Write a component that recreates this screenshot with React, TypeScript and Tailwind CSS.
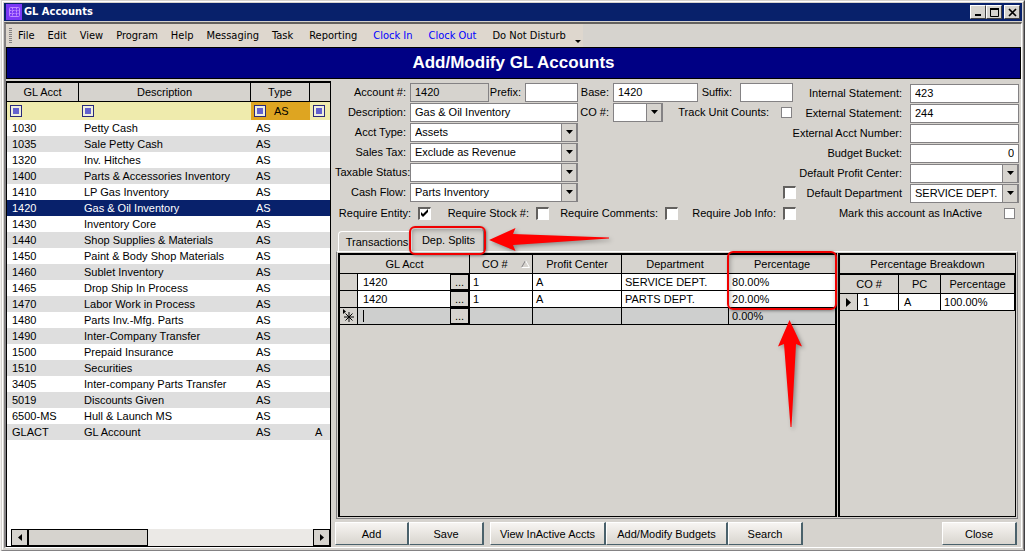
import { useState } from "react";
import type { ReactNode } from "react";

type Account = {
  acct: string;
  description: string;
  type: string;
  flag?: string;
};

const ACCOUNTS: Account[] = [
  { acct: "1030", description: "Petty Cash", type: "AS" },
  { acct: "1035", description: "Sale Petty Cash", type: "AS" },
  { acct: "1320", description: "Inv. Hitches", type: "AS" },
  { acct: "1400", description: "Parts & Accessories Inventory", type: "AS" },
  { acct: "1410", description: "LP Gas Inventory", type: "AS" },
  { acct: "1420", description: "Gas & Oil Inventory", type: "AS" },
  { acct: "1430", description: "Inventory Core", type: "AS" },
  { acct: "1440", description: "Shop Supplies & Materials", type: "AS" },
  { acct: "1450", description: "Paint & Body Shop Materials", type: "AS" },
  { acct: "1460", description: "Sublet Inventory", type: "AS" },
  { acct: "1465", description: "Drop Ship In Process", type: "AS" },
  { acct: "1470", description: "Labor Work in Process", type: "AS" },
  { acct: "1480", description: "Parts Inv.-Mfg. Parts", type: "AS" },
  { acct: "1490", description: "Inter-Company Transfer", type: "AS" },
  { acct: "1500", description: "Prepaid Insurance", type: "AS" },
  { acct: "1510", description: "Securities", type: "AS" },
  { acct: "3405", description: "Inter-company Parts Transfer", type: "AS" },
  { acct: "5019", description: "Discounts Given", type: "AS" },
  { acct: "6500-MS", description: "Hull & Launch MS", type: "AS" },
  { acct: "GLACT", description: "GL Account", type: "AS", flag: "A" },
];

const SPLITS = [
  { acct: "1420", co: "1", pc: "A", dept: "SERVICE DEPT.", pct: "80.00%" },
  { acct: "1420", co: "1", pc: "A", dept: "PARTS DEPT.", pct: "20.00%" },
];

const MENU = ["File", "Edit", "View", "Program", "Help", "Messaging"];

function TextField({
  id,
  value = "",
  className = "",
}: {
  id: string;
  value?: string;
  className?: string;
}) {
  return (
    <input
      id={id}
      type="text"
      defaultValue={value}
      className={`h-[19px] shrink-0 border border-[#848284] px-1 outline-none ${className}`}
    />
  );
}

function SelectField({ id, value = "", className = "" }: { id: string; value?: string; className?: string }) {
  return (
    <div className={`relative h-[19px] shrink-0 border border-[#848284] bg-white ${className}`}>
      <select id={id} defaultValue={value} className="block h-full w-full appearance-none bg-white pl-1 pr-4 outline-none">
        <option value={value}>{value}</option>
      </select>
      <span className="pointer-events-none absolute inset-y-0 right-0 flex w-4 items-center justify-center border-l border-r border-[#848284] bg-[#d6d3ce]">
        <svg width="7" height="4" viewBox="0 0 7 4">
          <path d="M0 0h7L3.5 4z" />
        </svg>
      </span>
    </div>
  );
}

function Check({ id, checked = false, flat = false, label }: { id: string; checked?: boolean; flat?: boolean; label?: string }) {
  const [on, setOn] = useState(checked);
  return (
    <span className="relative block shrink-0">
      <input
        id={id}
        type="checkbox"
        aria-label={label}
        checked={on}
        onChange={(e) => setOn(e.target.checked)}
        className={
          flat
            ? "block size-[11px] appearance-none border border-[#848284] bg-white"
            : "block size-[13px] appearance-none border-t-2 border-l-2 border-r border-b border-t-[#63615f] border-l-[#63615f] border-r-white border-b-white bg-white"
        }
      />
      {on && (
        <svg className="pointer-events-none absolute inset-0" width="13" height="13" viewBox="0 0 13 13">
          <path d="M3 5v3l2 2 5-5V2L5 7z" />
        </svg>
      )}
    </span>
  );
}

function FormLabel({ htmlFor, className = "", children }: { htmlFor: string; className?: string; children: ReactNode }) {
  return (
    <label htmlFor={htmlFor} className={`shrink-0 whitespace-nowrap text-right ${className}`}>
      {children}
    </label>
  );
}

function TitleButton({ label, children }: { label: string; children: ReactNode }) {
  return (
    <button
      aria-label={label}
      className="flex h-[14px] w-4 items-center justify-center border border-t-white border-l-white border-r-[#424142] border-b-[#424142] bg-[#d6d3ce]"
    >
      <svg width="9" height="9" viewBox="0 0 9 9" fill="none" stroke="black">
        {children}
      </svg>
    </button>
  );
}

function TitleBar() {
  return (
    <header className="flex h-[18px] items-center bg-[#08216b] pl-0.5 pr-0.5">
      <svg width="16" height="16" viewBox="0 0 16 16">
        <rect width="16" height="16" fill="#7b38f5" />
        <g fill="none" stroke="#c08bff">
          <rect x="3.5" y="3.5" width="10" height="9" rx="1" />
          <path d="M3.5 6.5h10M3.5 9.5h10M6.5 3.5v9M10.5 3.5v9" strokeDasharray="2 1" />
        </g>
      </svg>
      <h1 className="ml-0.5 flex-1 font-['DejaVu_Sans_Condensed','DejaVu_Sans',sans-serif] text-[11px] font-bold text-white">
        GL Accounts
      </h1>
      <TitleButton label="Minimize">
        <path d="M1 7h6" strokeWidth="2" />
      </TitleButton>
      <TitleButton label="Maximize">
        <path d="M.5 1v7.500h8V1" />
        <path d="M0 1h9" strokeWidth="2" />
      </TitleButton>
      <span className="w-0.5" />
      <TitleButton label="Close">
        <path d="M1 1l7 7M8 1L1 8" strokeWidth="1.700" />
      </TitleButton>
    </header>
  );
}

function MenuBar() {
  return (
    <nav className="flex h-[23px] font-['DejaVu_Sans_Condensed','DejaVu_Sans',sans-serif]">
      <div className="flex items-center gap-[13px] bg-[#ded7ce] pl-[3px] pr-0.5">
        <svg width="3" height="15" viewBox="0 0 3 15" className="-mr-[7px]">
          <path d="M1.500 0v15" stroke="#848284" strokeWidth="3" strokeDasharray="1 1" />
        </svg>
        {MENU.map((item) => (
          <button key={item}>{item}</button>
        ))}
        <div className="flex items-center gap-4">
          <button>Task</button>
          <button>Reporting</button>
          <button className="text-[#0000ff]">Clock In</button>
          <button className="text-[#0000ff]">Clock Out</button>
          <button>Do Not Disturb</button>
        </div>
        <button aria-label="More commands" className="-ml-1 self-end pb-1">
          <svg width="6" height="3" viewBox="0 0 6 3">
            <path d="M0 0h6L3 3z" />
          </svg>
        </button>
      </div>
    </nav>
  );
}

function FilterIcon() {
  return (
    <svg width="12" height="12" viewBox="0 0 12 12">
      <rect x=".5" y=".5" width="11" height="11" fill="#efefde" stroke="#29297b" />
      <rect x="3" y="3" width="6" height="6" fill="#6361ce" />
    </svg>
  );
}

function AccountList() {
  const [selected, setSelected] = useState("1420");
  const head = "h-[19px] border-b border-r border-black bg-[#d6d3ce] p-0 font-normal";
  return (
    <section className="mt-0.5 flex w-[325px] shrink-0 flex-col border-t-2 border-r border-b border-l border-black bg-white">
      <table className="w-full table-fixed border-separate border-spacing-0">
        <colgroup>
          <col className="w-[72px]" />
          <col className="w-[172px]" />
          <col className="w-[59px]" />
          <col />
        </colgroup>
        <thead>
          <tr>
            <th className={head}>GL Acct</th>
            <th className={head}>Description</th>
            <th className={head}>Type</th>
            <th aria-label="Flag" className="border-b border-black bg-[#d6d3ce] p-0" />
          </tr>
          <tr className="h-[18px] bg-[#efebad]">
            <td className="p-0 pl-[3px]"><FilterIcon /></td>
            <td className="p-0 pl-[3px]"><FilterIcon /></td>
            <td className="bg-[#dea521] p-0 pl-[3px]">
              <div className="flex items-center gap-2">
                <FilterIcon />
                AS
              </div>
            </td>
            <td className="p-0 pl-[3px]"><FilterIcon /></td>
          </tr>
        </thead>
        <tbody>
          {ACCOUNTS.map((a, i) => (
            <tr
              key={a.acct}
              onClick={() => setSelected(a.acct)}
              className={
                a.acct === selected
                  ? "h-4 bg-[#08216b] text-white"
                  : i % 2 === 1
                    ? "h-4 bg-[#dedede]"
                    : "h-4 bg-white"
              }
            >
              <td className="p-0 pl-[5px]">{a.acct}</td>
              <td className="p-0 pl-[5px]">{a.description}</td>
              <td className="p-0 pl-[5px]">{a.type}</td>
              <td className="p-0 pl-[5px]">{a.flag}</td>
            </tr>
          ))}
        </tbody>
      </table>
      {/* Horizontal scroll bar */}
      <div className="mt-auto flex h-[17px] pl-1">
        <button aria-label="Scroll left" className="flex w-[17px] items-center justify-center border border-black bg-[#d6d3ce]">
          <svg width="4" height="7" viewBox="0 0 4 7"><path d="M4 0v7L0 3.500z" /></svg>
        </button>
        <div className="flex-1 bg-[#ebe9e6]">
          <div className="h-full w-[42%] border border-black bg-[#d6d3ce]" />
        </div>
        <button aria-label="Scroll right" className="flex w-[17px] items-center justify-center border border-black bg-[#d6d3ce]">
          <svg width="4" height="7" viewBox="0 0 4 7"><path d="M0 0v7l4-3.500z" /></svg>
        </button>
      </div>
    </section>
  );
}

function AccountForm() {
  const row = "flex h-5 items-center";
  const side = "flex h-5 items-center justify-end gap-2";
  return (
    <form>
      <div className="flex justify-between">
        <div className="w-[462px] shrink-0 pt-[3px]">
          <div className={row}>
            <FormLabel htmlFor="account" className="w-[75px] pr-1">Account #:</FormLabel>
            <TextField id="account" value="1420" className="w-[79px] bg-[#d6d3ce]" />
            <FormLabel htmlFor="prefix" className="w-9 pr-1">Prefix:</FormLabel>
            <TextField id="prefix" className="w-[53px] bg-white" />
            <FormLabel htmlFor="base" className="w-[35px] pr-1">Base:</FormLabel>
            <TextField id="base" value="1420" className="w-[85px] bg-white" />
            <FormLabel htmlFor="suffix" className="w-[42px] pr-2">Suffix:</FormLabel>
            <TextField id="suffix" className="w-[53px] bg-white" />
          </div>
          <div className={row}>
            <FormLabel htmlFor="description" className="w-[75px] pr-1">Description:</FormLabel>
            <TextField id="description" value="Gas & Oil Inventory" className="w-[168px] bg-white" />
            <FormLabel htmlFor="co" className="w-[35px] pr-1">CO #:</FormLabel>
            <SelectField id="co" className="w-[50px]" />
            <FormLabel htmlFor="track" className="ml-auto pr-3">Track Unit Counts:</FormLabel>
            <Check id="track" flat />
            <span className="w-[5px]" />
          </div>
          <div className={row}>
            <FormLabel htmlFor="acct-type" className="w-[75px] pr-1">Acct Type:</FormLabel>
            <SelectField id="acct-type" value="Assets" className="w-[168px]" />
          </div>
          <div className={row}>
            <FormLabel htmlFor="sales-tax" className="w-[75px] pr-1">Sales Tax:</FormLabel>
            <SelectField id="sales-tax" value="Exclude as Revenue" className="w-[168px]" />
          </div>
          <div className={row}>
            <FormLabel htmlFor="taxable" className="w-[75px]">Taxable Status:</FormLabel>
            <SelectField id="taxable" className="w-[168px]" />
          </div>
          <div className={row}>
            <FormLabel htmlFor="cash-flow" className="w-[75px] pr-1">Cash Flow:</FormLabel>
            <SelectField id="cash-flow" value="Parts Inventory" className="w-[168px]" />
            <span className="ml-auto pr-px">
              <Check id="use-department" label="Use default department" />
            </span>
          </div>
        </div>
        <div className="min-w-0 flex-1 pt-1">
          <div className={side}>
            <FormLabel htmlFor="internal">Internal Statement:</FormLabel>
            <TextField id="internal" value="423" className="w-[109px] bg-white" />
          </div>
          <div className={side}>
            <FormLabel htmlFor="external">External Statement:</FormLabel>
            <TextField id="external" value="244" className="w-[109px] bg-white" />
          </div>
          <div className={side}>
            <FormLabel htmlFor="external-acct">External Acct Number:</FormLabel>
            <TextField id="external-acct" className="w-[109px] bg-white" />
          </div>
          <div className={side}>
            <FormLabel htmlFor="bucket">Budget Bucket:</FormLabel>
            <TextField id="bucket" value="0" className="w-[109px] bg-white text-right" />
          </div>
          <div className={side}>
            <FormLabel htmlFor="profit-center">Default Profit Center:</FormLabel>
            <SelectField id="profit-center" className="w-[109px]" />
          </div>
          <div className={side}>
            <FormLabel htmlFor="department">Default Department</FormLabel>
            <SelectField id="department" value="SERVICE DEPT." className="w-[109px]" />
          </div>
        </div>
      </div>
      <div className="flex h-5 items-center gap-[11px]">
        <div className="flex items-center gap-[7px]">
          <FormLabel htmlFor="req-entity" className="w-[76px]">Require Entity:</FormLabel>
          <Check id="req-entity" checked />
        </div>
        <div className="flex items-center gap-[7px]">
          <FormLabel htmlFor="req-stock" className="w-[87px]">Require Stock #:</FormLabel>
          <Check id="req-stock" />
        </div>
        <div className="flex items-center gap-[7px]">
          <FormLabel htmlFor="req-comments" className="w-[98px]">Require Comments:</FormLabel>
          <Check id="req-comments" />
        </div>
        <div className="flex items-center gap-[7px]">
          <FormLabel htmlFor="req-job" className="w-[87px]">Require Job Info:</FormLabel>
          <Check id="req-job" />
        </div>
        <div className="ml-auto flex items-center gap-[22px] pr-1">
          <FormLabel htmlFor="inactive">Mark this account as InActive</FormLabel>
          <Check id="inactive" flat />
        </div>
      </div>
    </form>
  );
}

function SplitsTable() {
  const head = "h-[19px] border-b border-r border-black p-0 font-normal";
  const cell = "border-b border-r border-black p-0 pl-[3px]";
  return (
    <div className="min-w-0 flex-[501] border-t-2 border-r-2 border-b border-l-2 border-black">
      <table className="w-full table-fixed border-separate border-spacing-0">
        <colgroup>
          <col className="w-[18px]" />
          <col className="w-[92px]" />
          <col className="w-5" />
          <col className="w-[63px]" />
          <col className="w-[89px]" />
          <col className="w-[107px]" />
          <col />
        </colgroup>
        <thead>
          <tr>
            <th colSpan={3} className={head}>GL Acct</th>
            <th className={head}>
              <div className="flex items-center justify-between pl-3 pr-0.5">
                CO #
                <svg width="9" height="8" viewBox="0 0 9 8" fill="none">
                  <path d="M.5 7.500L4.500.5" stroke="#848284" />
                  <path d="M4.500.5l4 7h-8" stroke="white" />
                </svg>
              </div>
            </th>
            <th className={head}>Profit Center</th>
            <th className={head}>Department</th>
            <th className="relative border-b border-black p-0 font-normal">
              Percentage
              {/* Callout around the percentage column, with its arrow */}
              <span className="pointer-events-none absolute -top-1 -right-0.5 -left-0.5 z-10 h-[59px] rounded-md border-2 border-[#f00000] shadow-[inset_1px_2px_5px_rgba(0,0,0,0.3),1px_1px_3px_rgba(0,0,0,0.4)]" />
              <svg
                className="pointer-events-none absolute top-16 left-12 z-10 drop-shadow-[2px_2px_2px_rgba(0,0,0,0.35)]"
                width="26"
                height="110"
                viewBox="0 0 26 110"
              >
                <path d="M12.500 1L25 27.500L19 25L14.500 108h-1L7 25L1 27.500z" fill="#ff0000" />
              </svg>
            </th>
          </tr>
        </thead>
        <tbody>
          {SPLITS.map((s) => (
            <tr key={s.dept} className="h-[17px] bg-white">
              <td className="border-b border-r border-black bg-[#d6d3ce] p-0" />
              <td className="border-b border-black p-0 pl-[5px]">{s.acct}</td>
              <td className="border-b border-r border-black p-0">
                <button aria-label="Look up account" className="block h-4 w-full border border-black bg-[#d6d3ce] leading-3">...</button>
              </td>
              <td className={cell}>{s.co}</td>
              <td className={cell}>{s.pc}</td>
              <td className={cell}>{s.dept}</td>
              <td className="border-b border-black p-0 pl-[3px]">{s.pct}</td>
            </tr>
          ))}
          <tr className="h-[17px] bg-[#cecfce]">
            <td className="border-b border-r border-black bg-[#d6d3ce] p-0">
              <svg width="16" height="14" viewBox="0 0 16 14" fill="none" stroke="black">
                <path d="M3 0v5l3-2.500z" fill="black" stroke="none" />
                <path d="M4 8h10M9 3v10M5.500 4.500l7 7M12.500 4.500l-7 7" />
              </svg>
            </td>
            <td className="border-b border-black p-0 pl-[5px]">
              <span className="block h-3 w-px bg-black" />
            </td>
            <td className="border-b border-r border-black p-0">
              <button aria-label="Look up account" className="block h-4 w-full border border-black bg-[#d6d3ce] leading-3">...</button>
            </td>
            <td className={cell} />
            <td className={cell} />
            <td className={cell} />
            <td className="border-b border-black p-0 pl-[3px]">0.00%</td>
          </tr>
        </tbody>
      </table>
    </div>
  );
}

function BreakdownTable() {
  const head = "h-[19px] border-b border-r border-black p-0 font-normal";
  return (
    <div className="min-w-0 flex-[177] border-t-2 border-r border-b border-l-2 border-black">
      <table className="w-full table-fixed border-separate border-spacing-0">
        <caption className="h-5 border-b-2 border-black leading-[18px]">Percentage Breakdown</caption>
        <colgroup>
          <col className="w-[18px]" />
          <col className="w-[41px]" />
          <col className="w-[42px]" />
          <col />
        </colgroup>
        <thead>
          <tr>
            <th colSpan={2} className={head}>CO #</th>
            <th className={head}>PC</th>
            <th className={head}>Percentage</th>
          </tr>
        </thead>
        <tbody>
          <tr className="h-[17px] bg-white">
            <td className="border-b border-r border-black bg-[#d6d3ce] p-0">
              <svg className="mx-auto" width="5" height="9" viewBox="0 0 5 9"><path d="M0 0v9l5-4.500z" /></svg>
            </td>
            <td className="border-b border-r border-black p-0 pl-[5px]">1</td>
            <td className="border-b border-r border-black p-0 pl-[5px]">A</td>
            <td className="border-b border-r border-black p-0 pl-[3px]">100.00%</td>
          </tr>
        </tbody>
      </table>
    </div>
  );
}

function Tabs() {
  return (
    <div className="mt-[5px] flex min-h-0 flex-1 flex-col pl-px">
      <div role="tablist" className="flex h-[23px] items-end pl-0.5">
        <button role="tab" aria-selected={false} className="h-5 w-[73px] whitespace-nowrap rounded-tl border-t border-l border-white pl-1">
          Transactions
        </button>
        <div className="relative h-full">
          <button role="tab" aria-selected className="h-full w-[73px] rounded-t border-t border-l border-r border-t-white border-l-white border-r-[#848284] pl-0.5">
            Dep. Splits
          </button>
          <span className="pointer-events-none absolute -top-0.5 -right-0.5 -bottom-1 -left-0.5 z-10 rounded-md border-2 border-[#f00000] shadow-[inset_1px_2px_5px_rgba(0,0,0,0.3),1px_1px_3px_rgba(0,0,0,0.4)]" />
          <svg
            className="pointer-events-none absolute top-0 left-full z-10 ml-1 drop-shadow-[2px_2px_2px_rgba(0,0,0,0.35)]"
            width="122"
            height="24"
            viewBox="0 0 122 24"
          >
            <path d="M1 12L27.500 0L25 6L121 9.500v1L25 17L27.500 23z" fill="#ff0000" />
          </svg>
        </div>
      </div>
      <div className="mr-px flex min-h-0 flex-1 gap-px border-t border-r border-b border-l border-t-white border-r-[#848284] border-b-[#848284] border-l-[#848284] p-px">
        <SplitsTable />
        <BreakdownTable />
      </div>
    </div>
  );
}

function ActionButton({ className, children }: { className: string; children: ReactNode }) {
  return (
    <button
      className={`h-[23px] whitespace-nowrap border-t border-r-2 border-b border-l border-t-white border-r-[#4a616b] border-b-[#4a616b] border-l-white bg-linear-to-b from-[#f7f5f2] to-[#d9d5cf] ${className}`}
    >
      {children}
    </button>
  );
}

export default function App() {
  return (
    <div className="h-screen bg-[#f0efed] pl-px font-['Liberation_Sans',Arial,sans-serif] text-[11px] leading-4 text-black">
      <div className="h-full border border-t-[#d6d3ce] border-l-[#d6d3ce] border-r-[#424142] border-b-[#848284]">
        <div className="flex h-full flex-col border border-t-white border-l-white border-r-[#848284] border-b-[#d6d3ce] bg-[#d6d3ce] p-px">
          <TitleBar />
          <div className="mt-px flex min-h-0 flex-1 flex-col border-t-2 border-r border-b border-l-2 border-t-[#63615f] border-l-[#848284] border-r-white border-b-white">
            <MenuBar />
            <h2 className="flex h-8 shrink-0 items-center justify-center border border-black bg-[#000084] text-[17px] font-bold text-white">
              Add/Modify GL Accounts
            </h2>
            <main className="flex min-h-0 flex-1">
              <AccountList />
              <div className="ml-1 mr-0.5 flex min-w-0 flex-1 flex-col">
                <AccountForm />
                <Tabs />
                <div className="mt-[3px] mb-0.5 flex">
                  <ActionButton className="w-[74px]">Add</ActionButton>
                  <ActionButton className="w-[75px]">Save</ActionButton>
                  <ActionButton className="ml-1.5 w-[116px]">View InActive Accts</ActionButton>
                  <ActionButton className="w-[122px]">Add/Modify Budgets</ActionButton>
                  <ActionButton className="w-[75px]">Search</ActionButton>
                  <ActionButton className="ml-auto mr-0.5 w-[75px]">Close</ActionButton>
                </div>
              </div>
            </main>
          </div>
        </div>
      </div>
    </div>
  );
}
